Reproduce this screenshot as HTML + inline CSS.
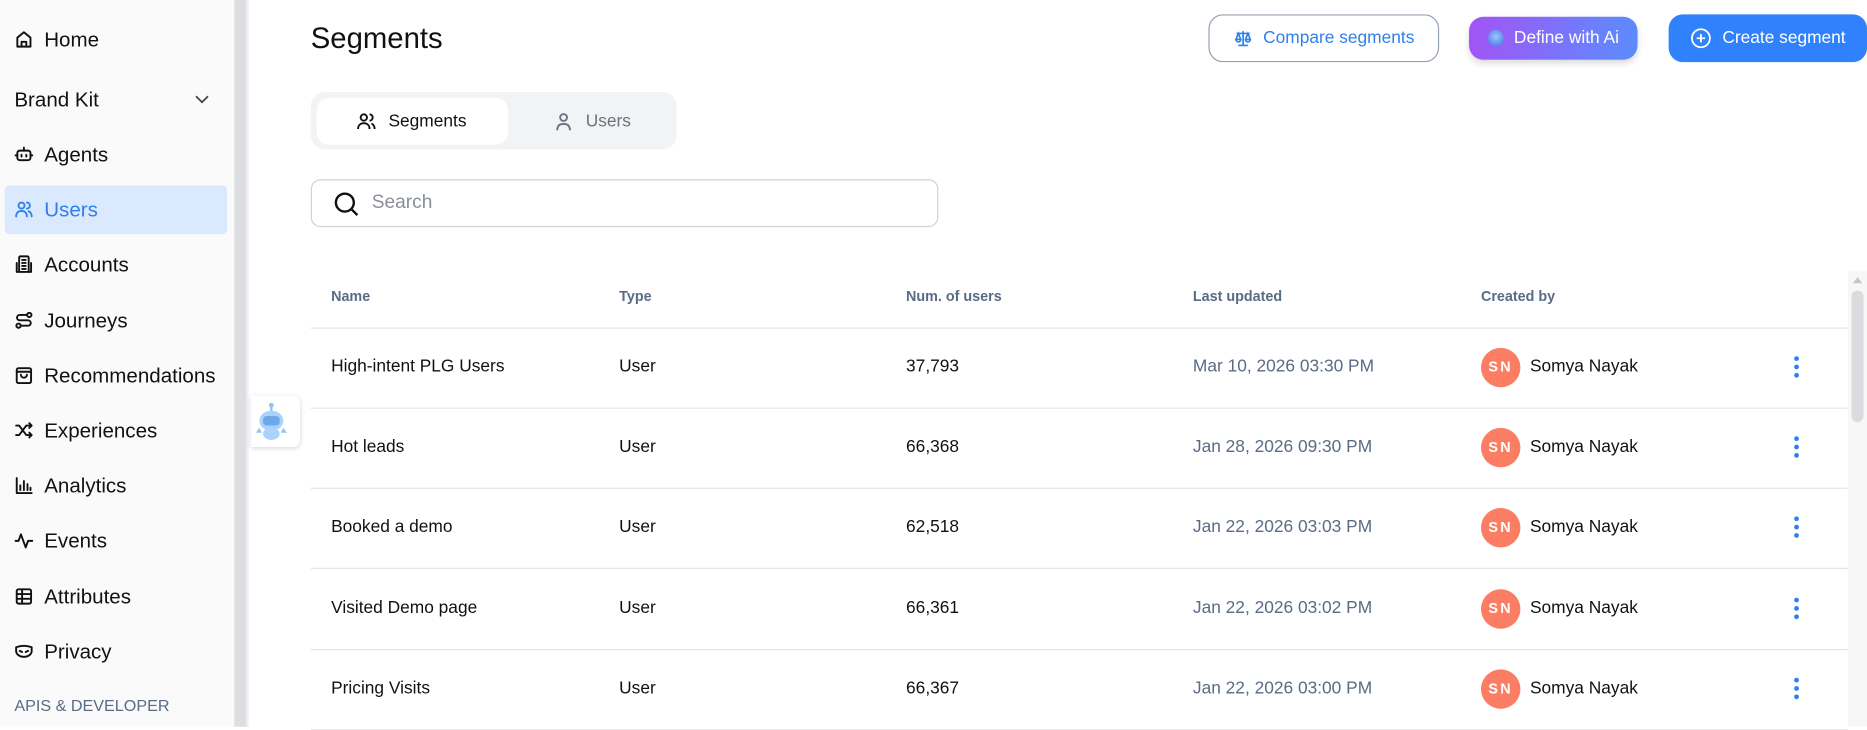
<!DOCTYPE html>
<html><head><meta charset="utf-8"><style>
*{box-sizing:border-box;margin:0;padding:0}
html,body{width:1867px;height:727px;overflow:hidden;background:#fff}
#w{position:absolute;left:0;top:0;width:1562px;height:608px;transform:scale(1.1953);transform-origin:0 0;font-family:"Liberation Sans",sans-serif;color:#111}
.a{position:absolute}
.sb{left:0;top:0;width:196px;height:608px;background:#fafafa}
.gut{left:196px;top:0;width:10px;height:608px;background:#dcdee2}
.gl{left:206px;top:0;width:2px;height:608px;background:#eceef1}
.nav{position:absolute;left:12px;font-size:17.2px;line-height:20px;display:flex;align-items:center;gap:9px;color:#111}
.nav svg{width:16px;height:16px;fill:none;stroke:#111;stroke-width:1.6;stroke-linecap:round;stroke-linejoin:round}
.hdr{font-size:12px;color:#5a6b85;font-weight:bold;top:241px}
.cell{font-size:14.5px;color:#111}
.line{left:260px;width:1286px;height:1px;background:#e3e5e8}
.av{width:33px;height:33px;border-radius:50%;background:#fb7d63;color:#fff;font-size:12px;font-weight:bold;text-align:center;line-height:33px;letter-spacing:2px}
.dots{width:4px}
.dots i{display:block;width:4px;height:4px;border-radius:50%;background:#2f7ff0;margin-bottom:3px}
.btn{display:flex;align-items:center;justify-content:center;gap:9px;font-size:14.5px;border-radius:12px}
</style></head><body><div id="w">
<div class="a sb"></div><div class="a gut"></div><div class="a gl"></div>

<div class="nav" style="top:23px"><svg viewBox="0 0 16 16"><path d="M2.5 14V6.5L8 2l5.5 4.5V14zM6 14v-4h4v4"/></svg>Home</div>
<div class="nav" style="top:73px;left:12px">Brand Kit</div>
<svg class="a" style="left:162px;top:76px;width:14px;height:14px" viewBox="0 0 14 14"><path d="M2 4.5l5 5 5-5" fill="none" stroke="#444" stroke-width="1.5"/></svg>
<div class="nav" style="top:119px"><svg viewBox="0 0 16 16"><rect x="2.5" y="5" width="11" height="8" rx="2"/><path d="M8 5V2.5M6 8.5v1.5M10 8.5v1.5M1 9h1.5M13.5 9H15"/></svg>Agents</div>
<div class="a" style="left:4px;top:155px;width:186px;height:41px;background:#dbe9fe;border-radius:4px"></div>
<div class="nav" style="top:165px;color:#2f80ed"><svg viewBox="0 0 16 16" style="stroke:#2f80ed"><circle cx="6" cy="5" r="2.5"/><path d="M1.5 14c0-3 2-4.5 4.5-4.5s4.5 1.5 4.5 4.5M10.5 2.5a2.5 2.5 0 010 5M12 9.8c1.5.6 2.5 2 2.5 4.2"/></svg>Users</div>
<div class="nav" style="top:211px"><svg viewBox="0 0 16 16"><rect x="4" y="1.5" width="8" height="13" rx="1"/><path d="M2 7v7.5h2M14 7v7.5h-2M6.5 4.5h3M6.5 7h3M6.5 9.5h3M6.5 12h3"/></svg>Accounts</div>
<div class="nav" style="top:258px"><svg viewBox="0 0 16 16"><circle cx="12.5" cy="3.5" r="1.8"/><circle cx="3.5" cy="12.5" r="1.8"/><path d="M10.7 3.5H4.5a2.2 2.2 0 000 4.5h7a2.2 2.2 0 010 4.5H5.3"/></svg>Journeys</div>
<div class="nav" style="top:304px"><svg viewBox="0 0 16 16"><rect x="2" y="2" width="12" height="12.5" rx="1.5"/><path d="M2 5h12M5.5 7.5a2.5 2.5 0 005 0"/></svg>Recommendations</div>
<div class="nav" style="top:350px"><svg viewBox="0 0 16 16"><path d="M1.5 4h2.5l6 8h4.5M1.5 12h2.5l6-8h4.5M12.5 2l2 2-2 2M12.5 10l2 2-2 2"/></svg>Experiences</div>
<div class="nav" style="top:396px"><svg viewBox="0 0 16 16"><path d="M2 2v12.5h12.5M5 12V8M8 12V4.5M11 12V7M13.5 12v-2"/></svg>Analytics</div>
<div class="nav" style="top:442px"><svg viewBox="0 0 16 16"><path d="M1 8.5h2.5l2-5.5 4 11 2-5.5H15"/></svg>Events</div>
<div class="nav" style="top:489px"><svg viewBox="0 0 16 16"><rect x="2" y="2" width="12" height="12" rx="1.5"/><path d="M2 6h12M2 10h12M6.5 2v12"/></svg>Attributes</div>
<div class="nav" style="top:535px"><svg viewBox="0 0 16 16"><path d="M1.5 4.5c4-1.5 9-1.5 13 0v3c0 3-3 5-6.5 5s-6.5-2-6.5-5zM4.5 7.5l2 1M11.5 7.5l-2 1"/></svg>Privacy</div>
<div class="a" style="left:12px;top:583px;font-size:13.5px;color:#5a6b85">APIS &amp; DEVELOPER</div>

<div class="a" style="left:260px;top:19px;font-size:24.5px;color:#111">Segments</div>

<div class="a" style="left:260px;top:77px;width:306px;height:48px;background:#f2f3f5;border-radius:12px"></div>
<div class="a" style="left:265px;top:82px;width:160px;height:39px;background:#fff;border-radius:10px"></div>
<div class="a" style="left:298px;top:93px;font-size:14.5px;display:flex;gap:10px;align-items:center"><svg width="17" height="17" viewBox="0 0 16 16" fill="none" stroke="#111" stroke-width="1.5"><circle cx="6" cy="5" r="2.5"/><path d="M1.5 14c0-3 2-4.5 4.5-4.5s4.5 1.5 4.5 4.5M10.5 2.5a2.5 2.5 0 010 5M12 9.8c1.5.6 2.5 2 2.5 4.2"/></svg>Segments</div>
<div class="a" style="left:463px;top:93px;font-size:14.5px;display:flex;gap:10px;align-items:center;color:#6b7280"><svg width="17" height="17" viewBox="0 0 16 16" fill="none" stroke="#6b7280" stroke-width="1.5"><circle cx="8" cy="5" r="2.7"/><path d="M3 15c0-3.5 2-5 5-5s5 1.5 5 5"/></svg>Users</div>

<div class="a" style="left:260px;top:150px;width:525px;height:40px;border:1px solid #cfd3d8;border-radius:8px"></div>
<svg class="a" style="left:279px;top:160px" width="22" height="22" viewBox="0 0 22 22" fill="none" stroke="#111" stroke-width="2"><circle cx="9.5" cy="9.5" r="7.5"/><path d="M15 15l5 5"/></svg>
<div class="a" style="left:311px;top:161px;font-size:16px;color:#8a8f98">Search</div>

<div class="a btn" style="left:1011px;top:12px;width:193px;height:40px;border:1px solid #95a1b5;color:#2f80ed"><svg width="16" height="16" viewBox="0 0 16 16" fill="none" stroke="#2f80ed" stroke-width="1.4"><path d="M8 2v12M4 14h8M2.5 4h11M4 4l-2 5h4zM12 4l-2 5h4zM2 9a2 2 0 004 0M10 9a2 2 0 004 0"/></svg>Compare segments</div>
<div class="a btn" style="left:1229px;top:14px;width:141px;height:36px;background:linear-gradient(100deg,#a353f5,#6f7dfd 70%,#5b8cfb);color:#fff;box-shadow:0 3px 6px rgba(0,0,0,.15)"><span style="display:inline-block;width:13px;height:14px;border-radius:50%;background:radial-gradient(circle at 50% 40%,#9cc5ff,#3b6fe0)"></span>Define with Ai</div>
<div class="a btn" style="left:1396px;top:12px;width:166px;height:40px;background:#2f82fb;color:#fff"><svg width="18" height="18" viewBox="0 0 18 18" fill="none" stroke="#fff" stroke-width="1.5"><circle cx="9" cy="9" r="7.5"/><path d="M9 5.5v7M5.5 9h7"/></svg>Create segment</div>

<div class="a hdr" style="left:277px">Name</div>
<div class="a hdr" style="left:518px">Type</div>
<div class="a hdr" style="left:758px">Num. of users</div>
<div class="a hdr" style="left:998px">Last updated</div>
<div class="a hdr" style="left:1239px">Created by</div>
<div class="a line" style="top:274px"></div>

<div class="a cell" style="left:277px;top:299px">High-intent PLG Users</div><div class="a cell" style="left:518px;top:299px">User</div><div class="a cell" style="left:758px;top:299px">37,793</div><div class="a cell" style="left:998px;top:299px;color:#5a6b85">Mar 10, 2026 03:30 PM</div><div class="a av" style="left:1239px;top:291px">SN</div><div class="a cell" style="left:1280px;top:299px">Somya Nayak</div><div class="a dots" style="left:1501px;top:298px"><i></i><i></i><i></i></div><div class="a line" style="top:341px"></div>
<div class="a cell" style="left:277px;top:366px">Hot leads</div><div class="a cell" style="left:518px;top:366px">User</div><div class="a cell" style="left:758px;top:366px">66,368</div><div class="a cell" style="left:998px;top:366px;color:#5a6b85">Jan 28, 2026 09:30 PM</div><div class="a av" style="left:1239px;top:358px">SN</div><div class="a cell" style="left:1280px;top:366px">Somya Nayak</div><div class="a dots" style="left:1501px;top:365px"><i></i><i></i><i></i></div><div class="a line" style="top:408px"></div>
<div class="a cell" style="left:277px;top:433px">Booked a demo</div><div class="a cell" style="left:518px;top:433px">User</div><div class="a cell" style="left:758px;top:433px">62,518</div><div class="a cell" style="left:998px;top:433px;color:#5a6b85">Jan 22, 2026 03:03 PM</div><div class="a av" style="left:1239px;top:425px">SN</div><div class="a cell" style="left:1280px;top:433px">Somya Nayak</div><div class="a dots" style="left:1501px;top:432px"><i></i><i></i><i></i></div><div class="a line" style="top:475px"></div>
<div class="a cell" style="left:277px;top:501px">Visited Demo page</div><div class="a cell" style="left:518px;top:501px">User</div><div class="a cell" style="left:758px;top:501px">66,361</div><div class="a cell" style="left:998px;top:501px;color:#5a6b85">Jan 22, 2026 03:02 PM</div><div class="a av" style="left:1239px;top:493px">SN</div><div class="a cell" style="left:1280px;top:501px">Somya Nayak</div><div class="a dots" style="left:1501px;top:500px"><i></i><i></i><i></i></div><div class="a line" style="top:543px"></div>
<div class="a cell" style="left:277px;top:568px">Pricing Visits</div><div class="a cell" style="left:518px;top:568px">User</div><div class="a cell" style="left:758px;top:568px">66,367</div><div class="a cell" style="left:998px;top:568px;color:#5a6b85">Jan 22, 2026 03:00 PM</div><div class="a av" style="left:1239px;top:560px">SN</div><div class="a cell" style="left:1280px;top:568px">Somya Nayak</div><div class="a dots" style="left:1501px;top:567px"><i></i><i></i><i></i></div><div class="a line" style="top:610px"></div>

<div class="a" style="left:1546px;top:227px;width:16px;height:381px;background:#f7f7f7"></div>
<div class="a" style="left:1550px;top:232px;width:0;height:0;border-left:4px solid transparent;border-right:4px solid transparent;border-bottom:5px solid #c4c7cc"></div>
<div class="a" style="left:1549px;top:243px;width:10px;height:110px;background:#d9dbdf;border-radius:5px"></div>

<div class="a" style="left:210px;top:331px;width:41px;height:43px;background:#fff;border-radius:0 6px 6px 0;box-shadow:0 1px 4px rgba(0,0,0,.15)"></div>
<svg class="a" style="left:213px;top:336px" width="28" height="34" viewBox="0 0 28 34"><circle cx="14" cy="3" r="2" fill="#8cc4f5"/><path d="M14 4v4" stroke="#8cc4f5" stroke-width="2"/><ellipse cx="14" cy="16" rx="10" ry="8.5" fill="#a9d3fb"/><rect x="7" y="12" width="14" height="8" rx="3" fill="#6ea8e8"/><ellipse cx="14" cy="27" rx="7" ry="5" fill="#a9d3fb"/><path d="M4 22l-3 4h5zM24 22l3 4h-5z" fill="#8cc4f5"/></svg>
</div></body></html>
